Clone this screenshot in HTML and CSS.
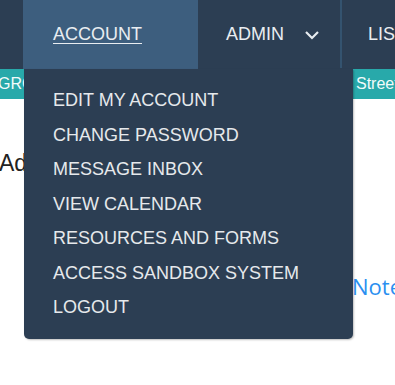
FILE: index.html
```html
<!DOCTYPE html>
<html>
<head>
	<meta charset="UTF-8">
	<title>Account</title>
	<link rel="stylesheet" href="styles.css">
</head>
<body>
	<header class="topnav">
		<div class="brand"></div>
		<div class="nav-item account open">
			<a class="nav-link" href="#">ACCOUNT</a>
			<ul class="dropdown">
				<li><a href="#">EDIT MY ACCOUNT</a></li>
				<li><a href="#">CHANGE PASSWORD</a></li>
				<li><a href="#">MESSAGE INBOX</a></li>
				<li><a href="#">VIEW CALENDAR</a></li>
				<li><a href="#">RESOURCES AND FORMS</a></li>
				<li><a href="#">ACCESS SANDBOX SYSTEM</a></li>
				<li><a href="#">LOGOUT</a></li>
			</ul>
		</div>
		<div class="nav-item admin">
			<span class="nav-link">ADMIN</span>
			<svg class="chev" width="16" height="10" viewBox="0 0 16 10"><path d="M2 2 L8 8 L14 2" fill="none" stroke="#e8ecf0" stroke-width="2.2"/></svg>
		</div>
		<div class="sep"></div>
		<div class="nav-item lists">
			<span class="nav-link">LISTS</span>
		</div>
	</header>
	<div class="subbar">
		<span class="tag first">GROUPS</span>
		<span class="tag street">Street</span>
	</div>
	<main class="content">
		<h1 class="title">Admin Account</h1>
		<div class="links"><a href="#">Notes</a></div>
	</main>
</body>
</html>
```

FILE: styles.css
```css
*{margin:0;padding:0;}
li{list-style:none;}
a{text-decoration:none;color:inherit;}
html,body{
	height:385px;
	overflow:hidden;
}
body{
	font-family:"Liberation Sans", Arial, sans-serif;
	background:#fff;
	width:395px;
}
.topnav{
	display:flex;
	height:69px;
	background:#2c3e53;
	white-space:nowrap;
}
.topnav > *{flex-shrink:0;}
.brand{width:23px;}
.nav-item{
	position:relative;
	display:flex;
	align-items:center;
	font-size:18px;
	color:#e9edf1;
}
.account{
	width:145px;
	padding-left:30px;
	background:#3d5e7e;
}
.account .nav-link{text-decoration:underline;text-underline-offset:3px;}
.admin{
	width:114px;
	padding-left:28px;
}
.chev{margin-left:20px;margin-top:1px;}
.sep{
	width:2px;
	height:68px;
	background:#34536f;
}
.lists{padding-left:26px;}
.dropdown{
	position:absolute;
	top:69px;
	left:1px;
	width:329px;
	padding:14px 0 14px;
	background:#2c3e53;
	border-radius:0 0 5px 5px;
	box-shadow:1px 1px 2px rgba(0,0,0,0.25);
	z-index:10;
}
.dropdown li{
	height:34.5px;
	line-height:34.5px;
	padding-left:29px;
	font-size:18px;
	color:#e6e9ec;
}
.subbar{
	display:flex;
	justify-content:space-between;
	height:30px;
	background:#28a9aa;
	color:#f2fbfb;
	font-size:16px;
	line-height:30px;
	white-space:nowrap;
	overflow:hidden;
}
.tag.first{margin-left:-2px;}
.tag.street{padding-left:3px;width:39px;overflow:hidden;}
.content{
	height:286px;
	padding-top:51px;
	box-sizing:border-box;
	overflow:hidden;
	white-space:nowrap;
}
.title{
	margin-left:-1px;
	font-size:23px;
	font-weight:normal;
	color:#222;
}
.links{
	margin-top:94px;
	margin-left:352px;
	font-family:"Open Sans", sans-serif;
	font-size:22px;
	color:#2b8ff0;
}
```
